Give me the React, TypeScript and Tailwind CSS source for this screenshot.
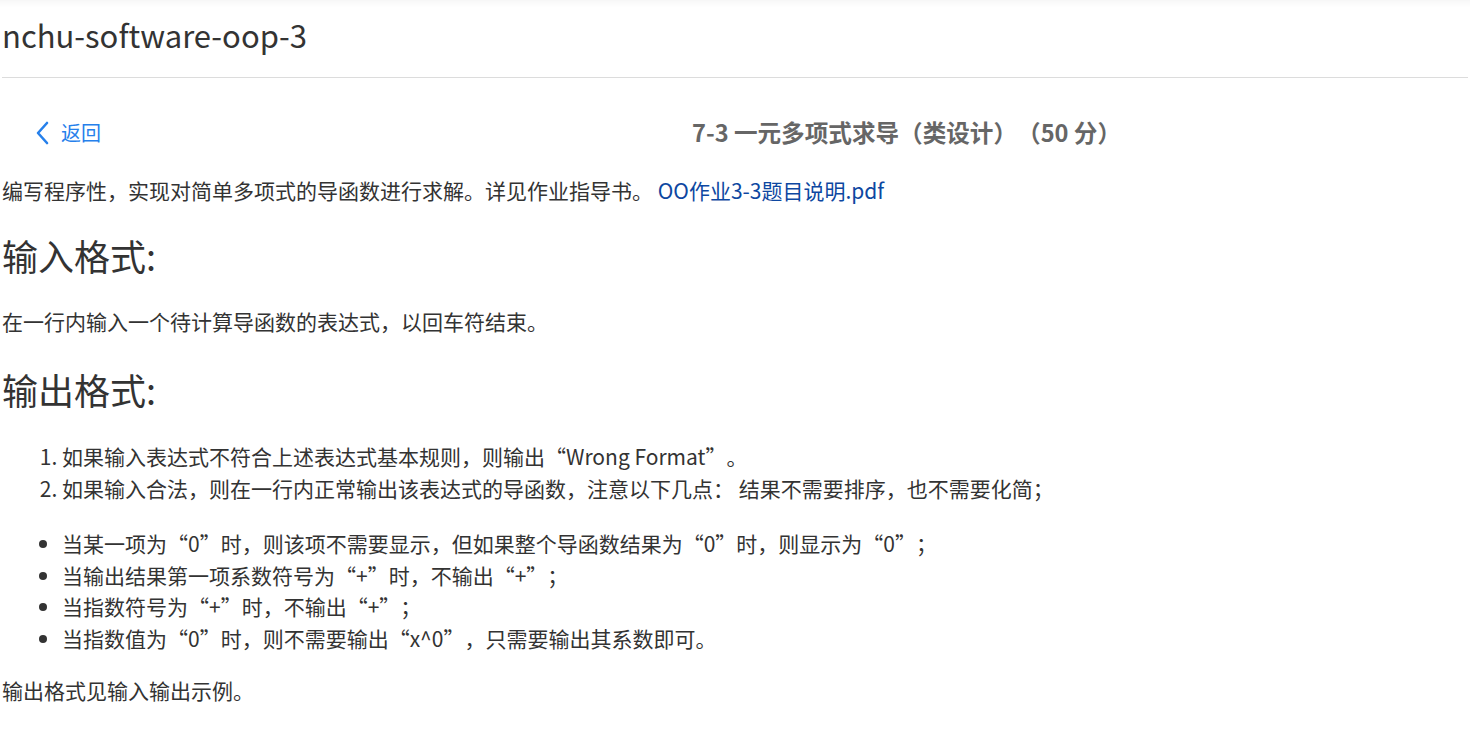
import { useState, type ReactNode } from "react";

const FONT = "font-['Noto_Sans_CJK_SC','Noto_Sans',sans-serif]";

const rules = [
  "如果输入表达式不符合上述表达式基本规则，则输出“Wrong Format”。",
  "如果输入合法，则在一行内正常输出该表达式的导函数，注意以下几点： 结果不需要排序，也不需要化简；",
];

const notes = [
  "当某一项为“0”时，则该项不需要显示，但如果整个导函数结果为“0”时，则显示为“0”；",
  "当输出结果第一项系数符号为“+”时，不输出“+”；",
  "当指数符号为“+”时，不输出“+”；",
  "当指数值为“0”时，则不需要输出“x^0”，只需要输出其系数即可。",
];

// curly quotes render full width in the original, so wrap them
function Cjk({ text }: { text: string }) {
  const parts: ReactNode[] = [];
  text.split(/([“”])/).forEach((p, i) => {
    if (p === "“" || p === "”") {
      parts.push(
        <span key={i} className="[font-variant-east-asian:full-width]">
          {p}
        </span>
      );
    } else if (p) {
      parts.push(p);
    }
  });
  return <>{parts}</>;
}

function BackLink() {
  const [hover, setHover] = useState(false);
  return (
    <a
      href="#"
      onMouseEnter={() => setHover(true)}
      onMouseLeave={() => setHover(false)}
      className={`flex items-center gap-[12px] text-[20px] text-[#2680eb] ${hover ? "opacity-80" : ""}`}
    >
      <svg width="14" height="24" viewBox="0 0 14 24" fill="none">
        <path d="M12 2 L3 12 L12 22" stroke="currentColor" strokeWidth="2.6" strokeLinecap="round" strokeLinejoin="round" />
      </svg>
      <span>返回</span>
    </a>
  );
}

export default function App() {
  return (
    <div lang="zh-CN" className={`min-h-screen bg-white text-[#333] [text-spacing-trim:space-all] ${FONT}`}>
      {/* Header */}
      <header className="h-[78px] px-[2px] shadow-[inset_0_10px_10px_-10px_rgba(0,0,0,0.07)]">
        <div className="flex h-full items-center border-b border-[#dcdcdc]">
          <h1 className="-mt-[8px] text-[31px] font-normal leading-none text-[#333]">nchu-software-oop-3</h1>
        </div>
      </header>

      <main className="px-[2px]">
        {/* Back + problem title */}
        <div className="mt-[31px] flex h-[48px] items-center">
          <div className="w-[343px] pl-[33px]">
            <BackLink />
          </div>
          <h2 className="flex-1 text-center text-[23.6px] font-bold text-[#666]">
            7-3 一元多项式求导（类设计）（50 分）
          </h2>
        </div>

        <div className="text-[21px] leading-[32px]">
          <p className="mt-[17px]">
            编写程序性，实现对简单多项式的导函数进行求解。详见作业指导书。{" "}
            <a href="#" className="text-[#0d47a1]">OO作业3-3题目说明.pdf</a>
          </p>

          <h3 className="mt-[25px] text-[36px] leading-[48px] font-normal">输入格式:</h3>
          <p className="mt-[26px]">在一行内输入一个待计算导函数的表达式，以回车符结束。</p>

          <h3 className="mt-[28px] text-[36px] leading-[48px] font-normal">输出格式:</h3>
          <ol className="mt-[27px] list-decimal pl-[60px]">
            {rules.map((r) => (
              <li key={r}>
                <Cjk text={r} />
              </li>
            ))}
          </ol>

          <ul className="mt-[24px] list-disc pl-[60px] leading-[31.5px]">
            {notes.map((n) => (
              <li key={n}>
                <Cjk text={n} />
              </li>
            ))}
          </ul>

          <p className="mt-[20px]">输出格式见输入输出示例。</p>
        </div>
      </main>
    </div>
  );
}
